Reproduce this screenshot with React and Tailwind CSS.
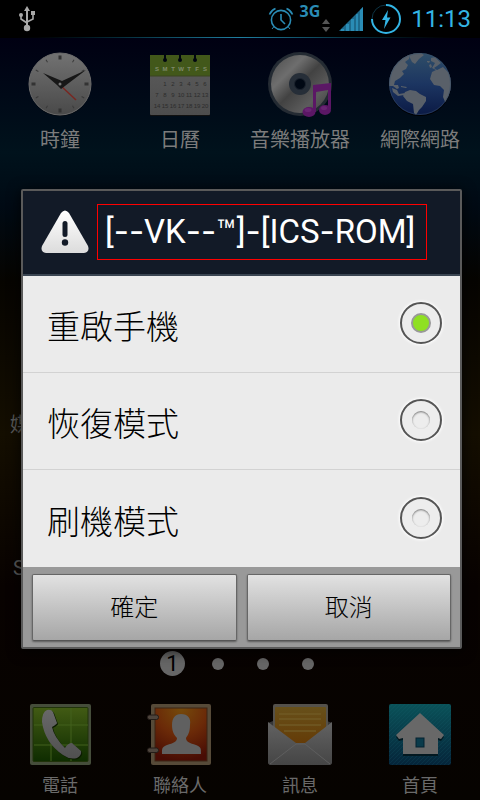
import React, { useState } from 'react';

const UsbIcon = () => (
  <svg width="18" height="26" viewBox="0 0 18 26" fill="#a8a8a8" stroke="#a8a8a8">
    <path d="M9 0 L12 5 H6 Z" stroke="none" />
    <path d="M9 4 V20" strokeWidth="2" fill="none" />
    <path d="M3 10 V13 L9 17 M15 9 V13 L9 16" strokeWidth="1.6" fill="none" />
    <circle cx="3" cy="9" r="2" stroke="none" />
    <rect x="13" y="5" width="4" height="4" stroke="none" />
    <circle cx="9" cy="22" r="3.2" stroke="none" />
  </svg>
);

const AlarmIcon = () => (
  <svg width="26" height="26" viewBox="0 0 26 26" fill="none" stroke="#2a8cb5">
    <circle cx="13" cy="14" r="9.6" strokeWidth="1.6" />
    <path d="M13 8 V14 L17 18" strokeWidth="1.6" />
    <path d="M1.5 8.5 A11 11 0 0 1 7.5 2.5 M18.5 2.5 A11 11 0 0 1 24.500 8.5" strokeWidth="1.6" />
    <path d="M6 20.500 L4 23 M20 20.500 L22 23" strokeWidth="1" />
  </svg>
);

const DataArrows = () => (
  <svg width="8" height="13" viewBox="0 0 8 13" fill="#555">
    <path d="M4 0 L8 5 H0 Z" />
    <path d="M4 13 L0 8 H8 Z" />
  </svg>
);

const SignalIcon = () => (
  <svg width="24" height="24" viewBox="0 0 24 24">
    <path d="M0 24 L24 0 V24 Z" fill="#1d6a8c" />
    <path d="M2 24 V22 H5 V24 Z M7 24 V17 H10 V24 Z M12 24 V12 H15 V24 Z M17 24 V7 H19 V24 Z M21 24 V3 L24 0 V24 Z" fill="#2a8cb5" />
  </svg>
);

const BatteryIcon = () => (
  <svg width="32" height="32" viewBox="0 0 32 32">
    <path d="M16 2 A14 14 0 1 1 2 16" fill="none" stroke="#33b5e5" strokeWidth="2" />
    <path d="M2 16 A14 14 0 0 1 16 2" fill="none" stroke="#0d3444" strokeWidth="1" />
    <path d="M18 7 L12 17 H15.500 L14 26 L20.500 14.500 H17 Z" fill="#33b5e5" />
  </svg>
);

const ClockIcon = () => (
  <svg width="64" height="64" viewBox="0 0 64 64">
    <defs>
      <linearGradient id="clockFace" x1="0" y1="0" x2="0" y2="1">
        <stop offset="0" stopColor="#727272" />
        <stop offset="1" stopColor="#494949" />
      </linearGradient>
    </defs>
    <circle cx="32" cy="33" r="31" fill="#000" opacity=".5" />
    <circle cx="32" cy="32" r="31" fill="url(#clockFace)" stroke="#6b6b6b" />
    {[0, 90, 180, 270].map((deg) => (
      <rect key={deg} x="30.5" y="3.500" width="3" height="4" fill="#333" transform={`rotate(${deg} 32 32)`} />
    ))}
    {[30, 60, 120, 150, 210, 240, 300, 330].map((deg) => (
      <path key={deg} d="M32 4 V7" stroke="#3a3a3a" transform={`rotate(${deg} 32 32)`} />
    ))}
    <path d="M32 33 L48 48" stroke="#7a2620" strokeWidth="1.400" />
    <path d="M15 21 L34 29 L58 18 L33 37 L29 33 Z" fill="#171717" />
    <circle cx="32" cy="32" r="1.500" fill="#777" />
  </svg>
);

const weekRows = [
  ['', '1', '2', '3', '4', '5', '6'],
  ['7', '8', '9', '10', '11', '12', '13'],
  ['14', '15', '16', '17', '18', '19', '20'],
];

const CalendarIcon = () => (
  <svg width="64" height="64" viewBox="0 0 64 64" fontFamily="Liberation Sans, sans-serif" textAnchor="middle">
    <defs>
      <linearGradient id="calPage" x1="0" y1="0" x2="0" y2="1">
        <stop offset="0" stopColor="#5c5c5c" />
        <stop offset="1" stopColor="#4d4d4d" />
      </linearGradient>
    </defs>
    <rect x="2" y="4" width="60" height="60" rx="1" fill="#111" />
    <rect x="2" y="3" width="60" height="60" rx="1" fill="url(#calPage)" />
    <rect x="2" y="3" width="60" height="21" fill="#42581a" />
    <path d="M2 24 H62" stroke="#3a4520" />
    {[17, 32, 47].map((x) => (
      <g key={x} fill="#000610">
        <rect x={x - 1} y="0" width="2" height="8" />
        <circle cx={x} cy="8" r="2" />
      </g>
    ))}
    {['S', 'M', 'T', 'W', 'T', 'F', 'S'].map((d, i) => (
      <text key={i} x={9 + i * 8} y="19" fontSize="6" fontWeight="bold" fill="#7f8a6a">{d}</text>
    ))}
    {weekRows.map((row, r) =>
      row.map((n, i) => (
        <text key={`${r}-${i}`} x={9 + i * 8} y={34 + r * 11} fontSize="6" fill="#2c2c2c">{n}</text>
      ))
    )}
  </svg>
);

const MusicIcon = () => (
  <svg width="64" height="66" viewBox="0 0 64 66">
    <defs>
      <linearGradient id="disc" x1="0" y1="0" x2="1" y2="1">
        <stop offset="0" stopColor="#4a4a4a" />
        <stop offset=".3" stopColor="#6e6e6e" />
        <stop offset=".5" stopColor="#424242" />
        <stop offset=".75" stopColor="#5c5c5c" />
        <stop offset="1" stopColor="#3c3c3c" />
      </linearGradient>
    </defs>
    <circle cx="32" cy="32" r="32" fill="#242b33" />
    <circle cx="32" cy="32" r="29" fill="url(#disc)" />
    <circle cx="32" cy="32" r="11" fill="#262e38" />
    <circle cx="32" cy="32" r="5.500" fill="#000814" stroke="#1a222d" />
    <path d="M45 33 L63 31 V57 H60 V38 L48 40 V60 H45 Z" fill="#5b1765" />
    <ellipse cx="41" cy="60" rx="6.500" ry="5" fill="#5b1765" />
    <ellipse cx="57" cy="58" rx="6" ry="5" fill="#5b1765" />
    <ellipse cx="40" cy="58" rx="3.500" ry="2" fill="#6a2474" />
    <ellipse cx="56" cy="56" rx="3" ry="2" fill="#6a2474" />
  </svg>
);

const GlobeIcon = () => (
  <svg width="64" height="64" viewBox="0 0 64 64">
    <defs>
      <linearGradient id="sea" x1="0" y1="0" x2="0" y2="1">
        <stop offset="0" stopColor="#2f4e68" />
        <stop offset=".5" stopColor="#1c3561" />
        <stop offset="1" stopColor="#0b1a45" />
      </linearGradient>
      <clipPath id="globeClip"><circle cx="32" cy="32" r="31" /></clipPath>
    </defs>
    <circle cx="32" cy="33" r="31" fill="#000" />
    <circle cx="32" cy="32" r="31" fill="url(#sea)" />
    <g clipPath="url(#globeClip)" fill="#596069">
      <path d="M0 34 L5 34 L9 37 L11 36 L10 33 L6 33 L7 29 L12 26 L16 22 L14 19 L18 17 L20 13 L17 10 L21 7 L22 2 L12 2 L0 20 Z" />
      <path d="M21 2 L32 0 L36 3 L31 7 L27 12 L24 10 L22 6 Z" />
      <path d="M4 36 L9 38 L11 42 L17 41 L16 43 L10 44 L5 40 Z M13 34 L19 35 L18 36 L13 35 Z" />
      <path d="M17 40 L22 38 L28 39 L32 42 L38 45 L38 49 L34 55 L31 58 L28 63 L26 61 L25 52 L19 49 L15 44 Z" />
      <path d="M43 6 L47 5 L53 11 L49 14 L46 16 L49 18 L55 15 L64 24 L64 46 L58 52 L55 45 L56 38 L52 34 L46 33 L42 27 L44 20 L48 18 L44 16 L47 11 L43 9 Z" />
      <path d="M39 9 L42 9 L41 11 L39 10 Z M41 13 L43 12 L44 15 L42 16 Z" />
    </g>
    <circle cx="32" cy="32" r="30.500" fill="none" stroke="#3a5068" opacity=".5" />
  </svg>
);

const PhoneIcon = () => (
  <svg width="62" height="62" viewBox="0 0 62 62">
    <defs>
      <linearGradient id="green" x1="0" y1="0" x2="0" y2="1">
        <stop offset="0" stopColor="#425b14" />
        <stop offset="1" stopColor="#0e2c00" />
      </linearGradient>
      <linearGradient id="handset" x1="0" y1="0" x2="0" y2="1">
        <stop offset="0" stopColor="#686868" />
        <stop offset="1" stopColor="#505050" />
      </linearGradient>
    </defs>
    <rect x="1" width="61" height="61" rx="2" fill="#454d3a" />
    <rect x="4" y="3.500" width="55" height="54" rx="1" fill="url(#green)" stroke="#20330a" />
    <path d="M22 4 V57 M42 4 V57 M5 21 H59 M5 41 H59" stroke="#43601c" />
    <path d="M18 6 Q22 5 24 8 L28 19 Q28 20 23 23 Q25 33 36 44 Q39 39 43 39 L52 47 Q53 51 48 54 Q41 56 34 51 Q16 39 13 18 Q13 8 18 6 Z" fill="#0b1a00" transform="translate(1 1)" />
    <path d="M18 6 Q22 5 24 8 L28 19 Q28 20 23 23 Q25 33 36 44 Q39 39 43 39 L52 47 Q53 51 48 54 Q41 56 34 51 Q16 39 13 18 Q13 8 18 6 Z" fill="url(#handset)" />
  </svg>
);

const ContactsIcon = () => (
  <svg width="66" height="62" viewBox="0 0 66 62">
    <defs>
      <radialGradient id="orange" cx=".5" cy="0" r="1">
        <stop offset="0" stopColor="#754b0b" />
        <stop offset=".5" stopColor="#6b2a08" />
        <stop offset="1" stopColor="#480c04" />
      </radialGradient>
    </defs>
    <rect x="4" y="0" width="60" height="61" rx="2" fill="#564a38" />
    <rect x="8" y="4" width="52" height="53" fill="url(#orange)" stroke="#3b2415" />
    <rect x="0.500" y="11" width="11" height="4.500" rx="2" fill="#4d443c" stroke="#241d18" />
    <rect x="0.500" y="44" width="11" height="4.500" rx="2" fill="#4d443c" stroke="#241d18" />
    <path d="M34 10 C41 10 44 14 43 21 C43 28 41 31 39 34 C39 38 43 39 49 41 C54 43 54 44 54 50 H15 C15 44 15 43 20 41 C26 39 30 38 30 34 C27 31 25 27 25 21 C25 14 28 10 34 10 Z" fill="#606060" />
  </svg>
);

const MailIcon = () => (
  <svg width="64" height="62" viewBox="0 0 64 62">
    <defs>
      <linearGradient id="letter" x1="0" y1="0" x2="0" y2="1">
        <stop offset="0" stopColor="#67501a" />
        <stop offset="1" stopColor="#643804" />
      </linearGradient>
      <linearGradient id="envelope" x1="0" y1="0" x2="0" y2="1">
        <stop offset="0" stopColor="#626262" />
        <stop offset="1" stopColor="#454545" />
      </linearGradient>
    </defs>
    <path d="M0 19 L5 17 H59 L64 19 V59 L62 61 H2 L0 59 Z" fill="#363636" />
    <path d="M5 2 Q5 0 7 0 H58 Q60 0 60 2 V40 H5 Z" fill="#54514b" />
    <rect x="7" y="3" width="51" height="42" rx="1" fill="url(#letter)" />
    <path d="M11 10 H53 M11 15 H53 M11 21 H53 M16 27 H48" stroke="#705925" strokeWidth="1.500" />
    <path d="M0 18 L28 39 H37 L64 18 V58 Q64 61 61 61 H3 Q0 61 0 58 Z" fill="url(#envelope)" />
    <path d="M2 60 L28 40 H37 L62 60" fill="none" stroke="#5e5e5e" />
  </svg>
);

const HomeIcon = () => (
  <svg width="62" height="62" viewBox="0 0 62 62">
    <defs>
      <linearGradient id="teal" x1="0" y1="0" x2="0" y2="1">
        <stop offset="0" stopColor="#0a5259" />
        <stop offset="1" stopColor="#05253a" />
      </linearGradient>
      <pattern id="stripes" width="4" height="4" patternUnits="userSpaceOnUse">
        <path d="M0 4 L4 0" stroke="#1c6473" strokeWidth=".6" />
      </pattern>
    </defs>
    <rect width="62" height="61" rx="2" fill="url(#teal)" />
    <rect width="62" height="61" rx="2" fill="url(#stripes)" opacity=".3" />
    <path d="M31 10 L55 32 L52 36 L49 35 V51 H14 V35 L10 36 L7 32 Z" fill="#021820" transform="translate(0 1)" />
    <path d="M31 9 L55 31 L52 35 L49 34 V50 H14 V34 L10 35 L7 31 Z M27 34 V43 H35 V34 Z" fill="#686868" fillRule="evenodd" />
    <rect x="27" y="34" width="8" height="9" fill="#0a3b4b" stroke="#052330" />
  </svg>
);

const WarningIcon = () => (
  <svg width="48" height="44" viewBox="0 0 48 44" className="shrink-0">
    <defs>
      <linearGradient id="warn" x1="0" y1="0" x2="0" y2="1">
        <stop offset="0" stopColor="#fff" />
        <stop offset="1" stopColor="#dcdcdc" />
      </linearGradient>
    </defs>
    <path d="M20 3 Q24 -2 28 3 L47 36 Q49 42 43 43 H5 Q-1 42 1 36 Z" fill="url(#warn)" />
    <rect x="21.500" y="11" width="5" height="16" rx="2.500" fill="#121a27" />
    <circle cx="24" cy="32.500" r="3.200" fill="#121a27" />
  </svg>
);

const apps = [
  { name: '時鐘', icon: <ClockIcon /> },
  { name: '日曆', icon: <CalendarIcon /> },
  { name: '音樂播放器', icon: <MusicIcon /> },
  { name: '網際網路', icon: <GlobeIcon /> },
];

const dock = [
  { name: '電話', icon: <PhoneIcon /> },
  { name: '聯絡人', icon: <ContactsIcon /> },
  { name: '訊息', icon: <MailIcon /> },
  { name: '首頁', icon: <HomeIcon /> },
];

const options = [
  { id: 'reboot', label: '重啟手機' },
  { id: 'recovery', label: '恢復模式' },
  { id: 'download', label: '刷機模式' },
];

const StatusBar = () => (
  <header className="bg-black">
    <div className="flex h-[37px] items-center justify-between pl-[18px] pr-[9px]">
      <UsbIcon />
      <div className="flex items-center">
        <AlarmIcon />
        <span className="ml-[5px] self-start font-['Noto_Sans'] text-base leading-4 font-bold text-[#2a8cb5]">3G</span>
        <span className="mt-[14px] ml-[2px]"><DataArrows /></span>
        <span className="ml-[9px]"><SignalIcon /></span>
        <span className="ml-[7px]"><BatteryIcon /></span>
        <time className="ml-[9px] text-2xl leading-8 text-[#33b5e5]">11:13</time>
      </div>
    </div>
    <div className="h-px bg-linear-to-r from-black via-[#1f7f9f] to-black" />
  </header>
);

const HomeScreen = () => (
  <div className="flex flex-1 flex-col bg-[linear-gradient(to_bottom,#000012,#00121c_15%,#000a14_22%,#060400_32%,#140e00_52%,#080200_72%,#060300)]">
    <div className="grid h-[143px] grid-cols-4 pt-[14px]">
      {apps.map((app) => (
        <a key={app.name} href="#" className="flex flex-col items-center text-xl leading-6 text-[#7c7c7c]">
          <span className="flex h-[76px] items-start">{app.icon}</span>
          <span className="whitespace-nowrap">{app.name}</span>
        </a>
      ))}
    </div>
    <div className="flex flex-1 flex-col text-xl leading-6 text-[#5a5a5a]">
      <p className="mt-[232px] pl-[10px]">媒</p>
      <p className="mt-[119px] pl-[13px]">S</p>
      <div className="mt-auto mb-7 flex items-center justify-center">
        <span className="flex w-[45px] justify-center">
          <span className="flex size-[25px] items-center justify-center rounded-full bg-[#666] text-[22px] leading-6 text-black">1</span>
        </span>
        {[2, 3, 4].map((page) => (
          <span key={page} className="flex w-[45px] justify-center">
            <span className="size-3 rounded-full bg-[#666]" />
          </span>
        ))}
      </div>
    </div>
    <nav className="grid grid-cols-4 pb-1">
      {dock.map((app) => (
        <a key={app.name} href="#" className="flex flex-col items-center text-lg leading-5 text-[#6a6a6a]">
          <span className="flex h-[72px] items-start">{app.icon}</span>
          <span>{app.name}</span>
        </a>
      ))}
    </nav>
  </div>
);

// Roboto's hyphen is short, so the dashes use Inter's wider one
const Title = ({ text }) =>
  text.split(/(-+)/).map((part, i) =>
    part.startsWith('-') ? <span key={i} className="font-[Inter]">{part}</span> : part
  );

const PowerDialog = () => {
  const [selected, setSelected] = useState('reboot');
  const buttonClass =
    'h-[67px] flex-1 rounded-[2px] border border-[#666] border-b-[#555] bg-linear-to-b from-[#e2e2e2] to-[#a6a6a6] text-2xl font-light text-black shadow-[0_1px_2px_rgba(0,0,0,0.4)]';

  return (
    <div role="dialog" aria-labelledby="dialog-title" className="w-full rounded-[2px] border-2 border-[#5a5a5a] bg-[#ebebeb] shadow-[0_2px_14px_rgba(0,0,0,0.8)]">
      <div className="flex items-center gap-2 border-b-2 border-[#3a4552] bg-[#121a27] pt-[13px] pr-[33px] pb-[14px] pl-[18px]">
        <WarningIcon />
        <h1 id="dialog-title" className="h-14 flex-1 border border-[#f00] pl-[7px] text-[33px] leading-[52px] whitespace-nowrap text-white">
          <Title text="[--VK--™]-[ICS-ROM]" />
        </h1>
      </div>
      <div>
        {options.map((opt) => (
          <label key={opt.id} htmlFor={opt.id} className="flex h-[97px] items-center justify-between border-b border-[#d2d2d2] pr-[18px] pl-6 text-[33px] font-light text-black last:border-b-0">
            <span className="pt-2">{opt.label}</span>
            <input
              type="radio"
              id={opt.id}
              name="power"
              checked={selected === opt.id}
              onChange={() => setSelected(opt.id)}
              className="mb-[2px] grid size-[42px] appearance-none place-items-center rounded-full border-2 border-[#555] bg-[#ededed] shadow-[0_0_3px_1px_#fff] before:size-[18px] before:rounded-full before:shadow-[inset_0_1px_2px_#777] before:content-[''] checked:before:size-5 checked:before:border-2 checked:before:border-[#999] checked:before:bg-[#8fe022] checked:before:shadow-none"
            />
          </label>
        ))}
      </div>
      <div className="flex gap-[10px] bg-[#999] px-[9px] pt-[7px] pb-[6px]">
        <button type="button" className={buttonClass}>確定</button>
        <button type="button" className={buttonClass}>取消</button>
      </div>
    </div>
  );
};

const App = () => {
  return (
    <div className="flex min-h-screen flex-col overflow-hidden bg-black font-[Roboto,'Noto_Sans_CJK_TC',sans-serif]">
      <StatusBar />
      <main className="relative flex flex-1 flex-col">
        <HomeScreen />
        <div className="absolute inset-0 flex items-center justify-center pr-[18px] pl-[21px]">
          <PowerDialog />
        </div>
      </main>
    </div>
  );
};

export default App;
